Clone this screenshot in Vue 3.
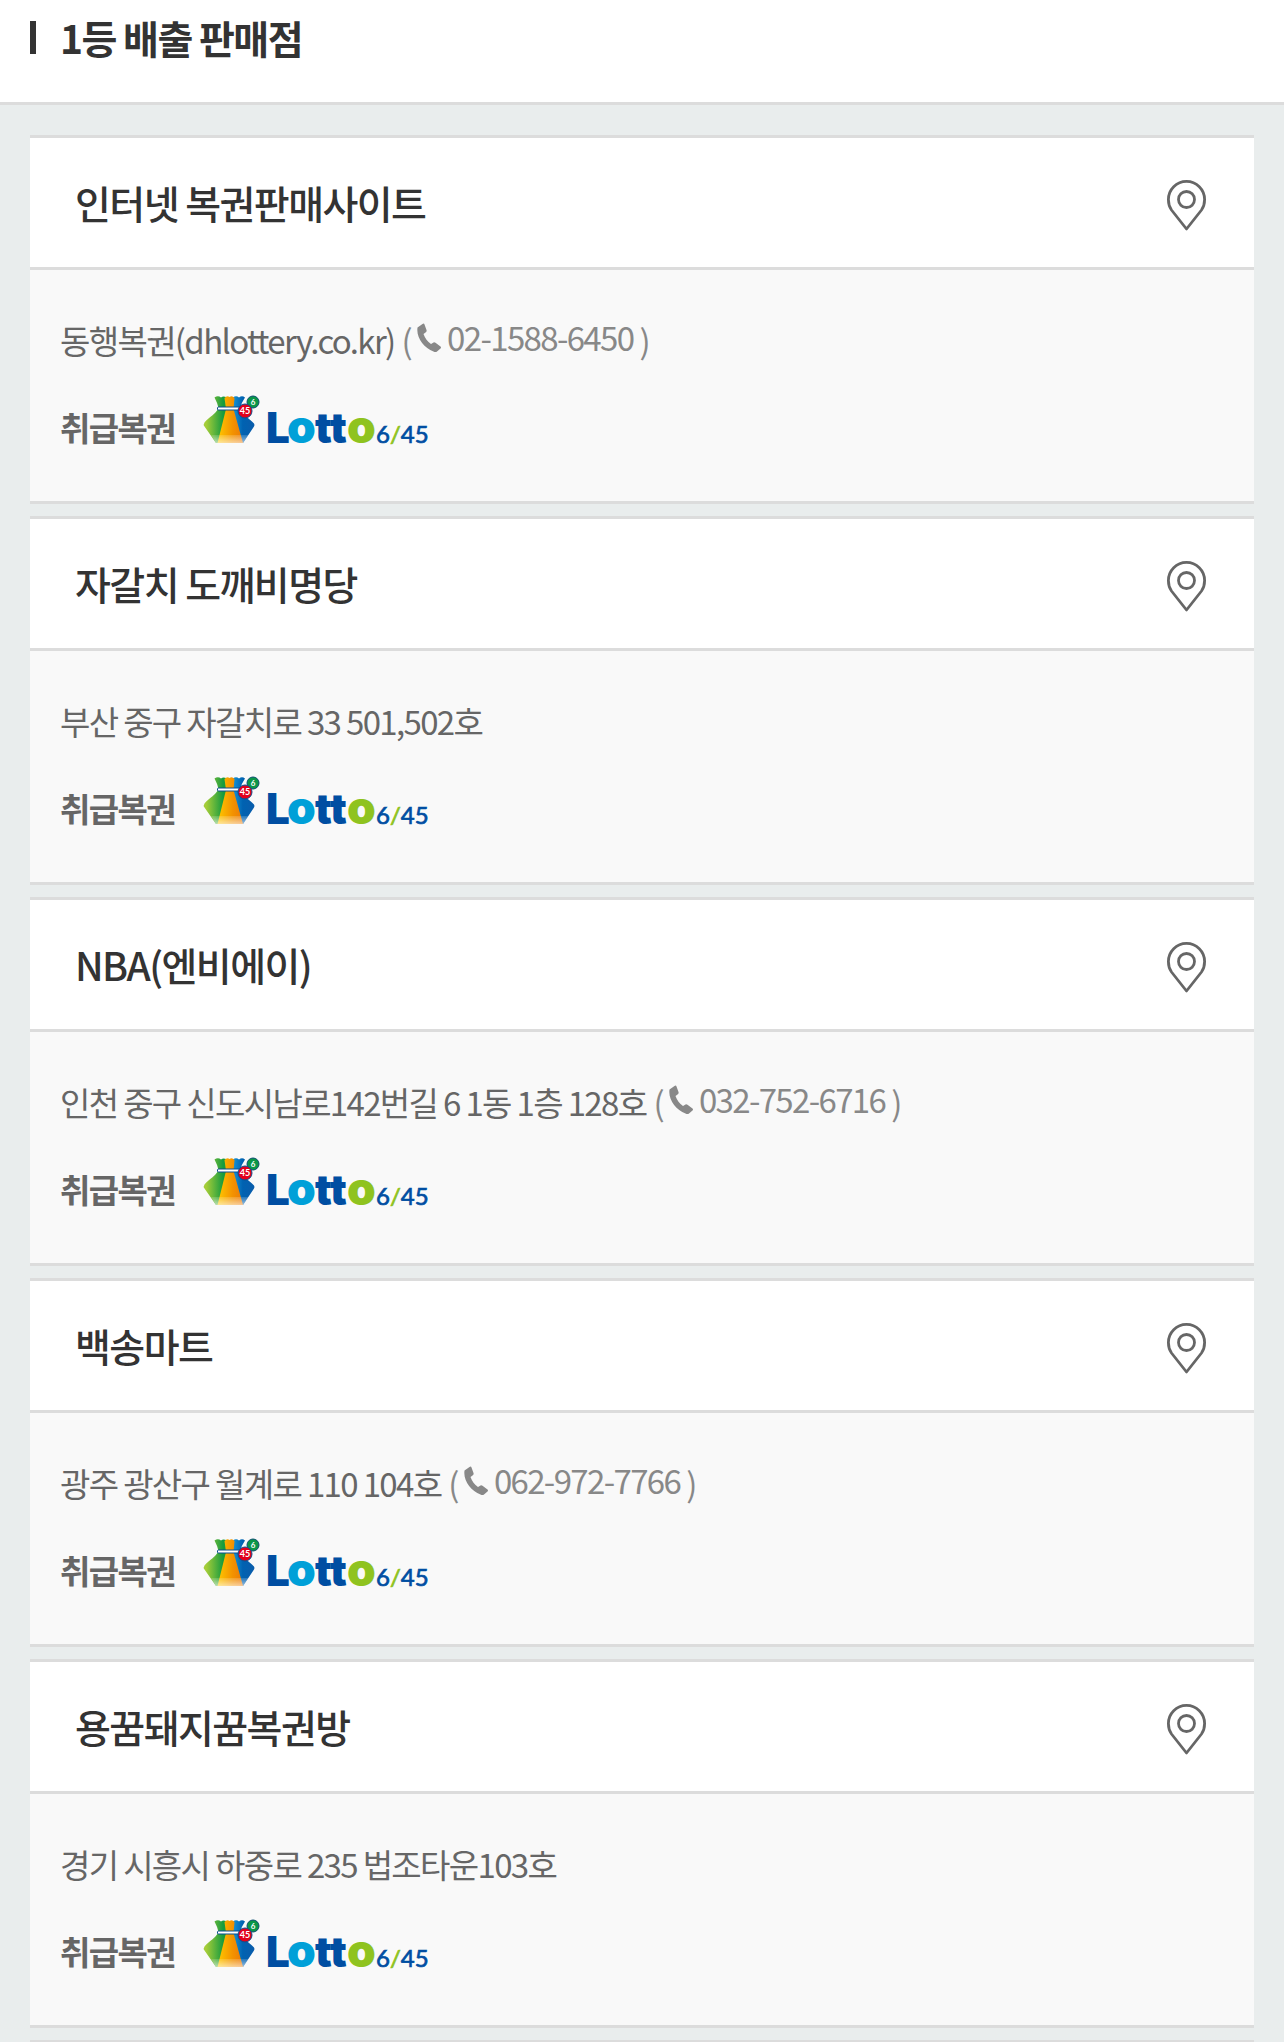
<script setup>
const stores = [
  { name: '인터넷 복권판매사이트', address: '동행복권(dhlottery.co.kr)', phone: '02-1588-6450' },
  { name: '자갈치 도깨비명당', address: '부산 중구 자갈치로 33 501,502호', phone: '' },
  { name: 'NBA(엔비에이)', address: '인천 중구 신도시남로142번길 6 1동 1층 128호', phone: '032-752-6716' },
  { name: '백송마트', address: '광주 광산구 월계로 110 104호', phone: '062-972-7766' },
  { name: '용꿈돼지꿈복권방', address: '경기 시흥시 하중로 235 법조타운103호', phone: '' },
]
</script>

<template>
  <main class="page">
    <header class="top">
      <h1 class="top-title">1등 배출 판매점</h1>
    </header>

    <ul class="stores">
      <li v-for="store in stores" :key="store.name" class="store">
        <div class="store-head">
          <h2 class="store-name">{{ store.name }}</h2>
          <button class="map-button" type="button" :aria-label="`${store.name} 지도 보기`">
            <svg width="40" height="57" viewBox="0 -5 40 57" fill="none" stroke="#666" aria-hidden="true">
              <path d="M20.500 50 5.500 31C3 27.500 2.400 24 2.400 20.500a18.100 18.100 0 0 1 36.200 0c0 3.500-.6 7-3.100 10.500Z" stroke-width="2.800" stroke-linejoin="round" />
              <circle cx="20.500" cy="20.500" r="8" stroke-width="2.800" />
            </svg>
          </button>
        </div>
        <div class="store-body">
          <p class="address">
            <span>{{ store.address }}</span>
            <span v-if="store.phone" class="contact">(
              <a class="phone" :href="`tel:${store.phone}`">
                <svg width="24" height="32" viewBox="0 -2 24 32" fill="#888" aria-hidden="true">
                  <path d="M0.500 4.500 5.500 1Q7 0 7.500 1.500L9.500 7Q10 8.500 8.500 9.500L6.500 11C8 15.500 10.500 18.500 14 21L16.500 19.500Q17.500 19 18.500 19.800L23.500 23.500Q24.500 24.500 23.500 25.500L20 28.500Q18.500 29.500 16.500 28.500C7 25-1 14.500 0.500 4.500Z" />
                </svg>{{ store.phone }}</a>
              )</span>
          </p>
          <div class="games">
            <span class="games-label">취급복권</span>
            <svg class="logo" width="224" height="60" viewBox="0 0 224 60" role="img" aria-label="Lotto 6/45">
              <defs>
                <linearGradient id="bagGreen"><stop offset="0.100" stop-color="#a5cd39" /><stop offset="0.800" stop-color="#179b3e" /></linearGradient>
                <linearGradient id="bagOrange"><stop offset="0" stop-color="#ffc800" /><stop offset="0.600" stop-color="#f39200" /><stop offset="1" stop-color="#ea7a08" /></linearGradient>
                <linearGradient id="bagBlue"><stop offset="0" stop-color="#1b9ddb" /><stop offset="0.500" stop-color="#0062b1" /><stop offset="1" stop-color="#0a5cab" /></linearGradient>
                <linearGradient id="bagShine" x2="0" y2="1"><stop offset="0" stop-color="#fff" stop-opacity="0.150" /><stop offset="1" stop-color="#fff" stop-opacity="0.600" /></linearGradient>
              </defs>
              <path d="M11.500 2.500Q15 0 18 2.500 20 1 23 2L25 14 17 48H13L1.500 31.500Q0 29.500 1.500 27.500C6 22 13 19 15.500 13Q14.500 8 11.500 2.500Z" fill="url(#bagGreen)" />
              <path d="M30 2.500Q33 0 36 2.500 39 0 42 2.500 38 8 37 14C39 20 46 23 51 28.500Q52 30 51 31.500L40 48H36L28 14Z" fill="url(#bagBlue)" />
              <path d="M21.500 3Q24 0 26.500 2 29 0 31.500 3L30.500 14 40 48H14.500L23 14Z" fill="url(#bagOrange)" />
              <path d="M8 40H45.500L40 48H13Z" fill="url(#bagShine)" />
              <rect x="14.500" y="12" width="22" height="3" rx="1" fill="#fff" stroke="#0b4f8f" stroke-width="1" />
              <circle cx="50" cy="7" r="6" fill="#0a9648" stroke="#0b4f6f" />
              <circle cx="42" cy="16" r="7" fill="#e2001a" stroke="#0b4f8f" />
              <g fill="#fff" font-family="Lato, sans-serif" font-weight="700" text-anchor="middle">
                <text x="50" y="10" font-size="8">6</text>
                <text x="42" y="19" font-size="9">45</text>
              </g>
              <text y="48" font-family="Inter, sans-serif" font-weight="900" font-size="42">
                <tspan x="63" fill="#004ea2">L</tspan><tspan x="84" font-size="46" fill="#00a0d8">o</tspan><tspan x="112" fill="#004ea2">tt</tspan><tspan x="144" font-size="46" fill="#8fc31f">o</tspan>
              </text>
              <text x="173" y="48" font-family="Lato, sans-serif" font-size="24" fill="#004ea2" stroke="#004ea2" stroke-width="0.700">6<tspan fill="#8fc31f" stroke="#8fc31f">/</tspan>45</text>
            </svg>
          </div>
        </div>
      </li>
    </ul>
  </main>
</template>

<style>
body {
  margin: 0;
  background: #e9eded;
}
</style>

<style scoped>
.page {
  font-family: "Noto Sans CJK KR", "Noto Sans", sans-serif;
  color: #333;
}
.top {
  padding: 10px 30px 38px;
  background: #fff;
  border-bottom: 3px solid #dcdcdc;
}
.top-title {
  display: flex;
  align-items: center;
  gap: 24px;
  margin: 0;
  font-size: 39px;
  line-height: 54px;
  font-weight: 700;
  letter-spacing: -0.04em;
}
.top-title::before {
  content: "";
  width: 6px;
  height: 33px;
  background: #333;
}
.stores {
  display: flex;
  flex-direction: column;
  gap: 12px;
  margin: 0;
  padding: 30px 30px 0;
  list-style: none;
}
.stores::after {
  content: "";
  border-top: 2px solid #dcdcdc;
}
.store {
  background: #f9f9f9;
  border: solid #dcdcdc;
  border-width: 3px 0;
}
.store-head {
  display: flex;
  align-items: center;
  justify-content: space-between;
  padding: 36px 48px 36px 45px;
  background: #fff;
  border-bottom: 3px solid #dcdcdc;
}
.store-name {
  margin: 0;
  font-size: 39px;
  line-height: 57px;
  font-weight: 500;
  letter-spacing: -0.04em;
}
.map-button {
  display: flex;
  padding: 0;
  border: 0;
  background: none;
  cursor: pointer;
}
.store-body {
  display: flex;
  flex-direction: column;
  gap: 31px;
  padding: 46px 30px 46px;
  font-size: 33px;
  letter-spacing: -0.05em;
  color: #666;
}
.address {
  display: flex;
  flex-wrap: wrap;
  gap: 7px;
  margin: 0;
  line-height: 48px;
}
.contact {
  display: flex;
  align-items: flex-start;
  gap: 6px;
  color: #888;
}
.phone {
  display: flex;
  align-items: center;
  gap: 6px;
  line-height: 42px;
  color: inherit;
  text-decoration: none;
}
.games {
  display: flex;
  align-items: flex-start;
  gap: 28px;
}
.games-label {
  line-height: 64px;
  height: 60px;
  font-weight: 700;
}
.logo {
  overflow: visible;
  letter-spacing: 0;
}
</style>
